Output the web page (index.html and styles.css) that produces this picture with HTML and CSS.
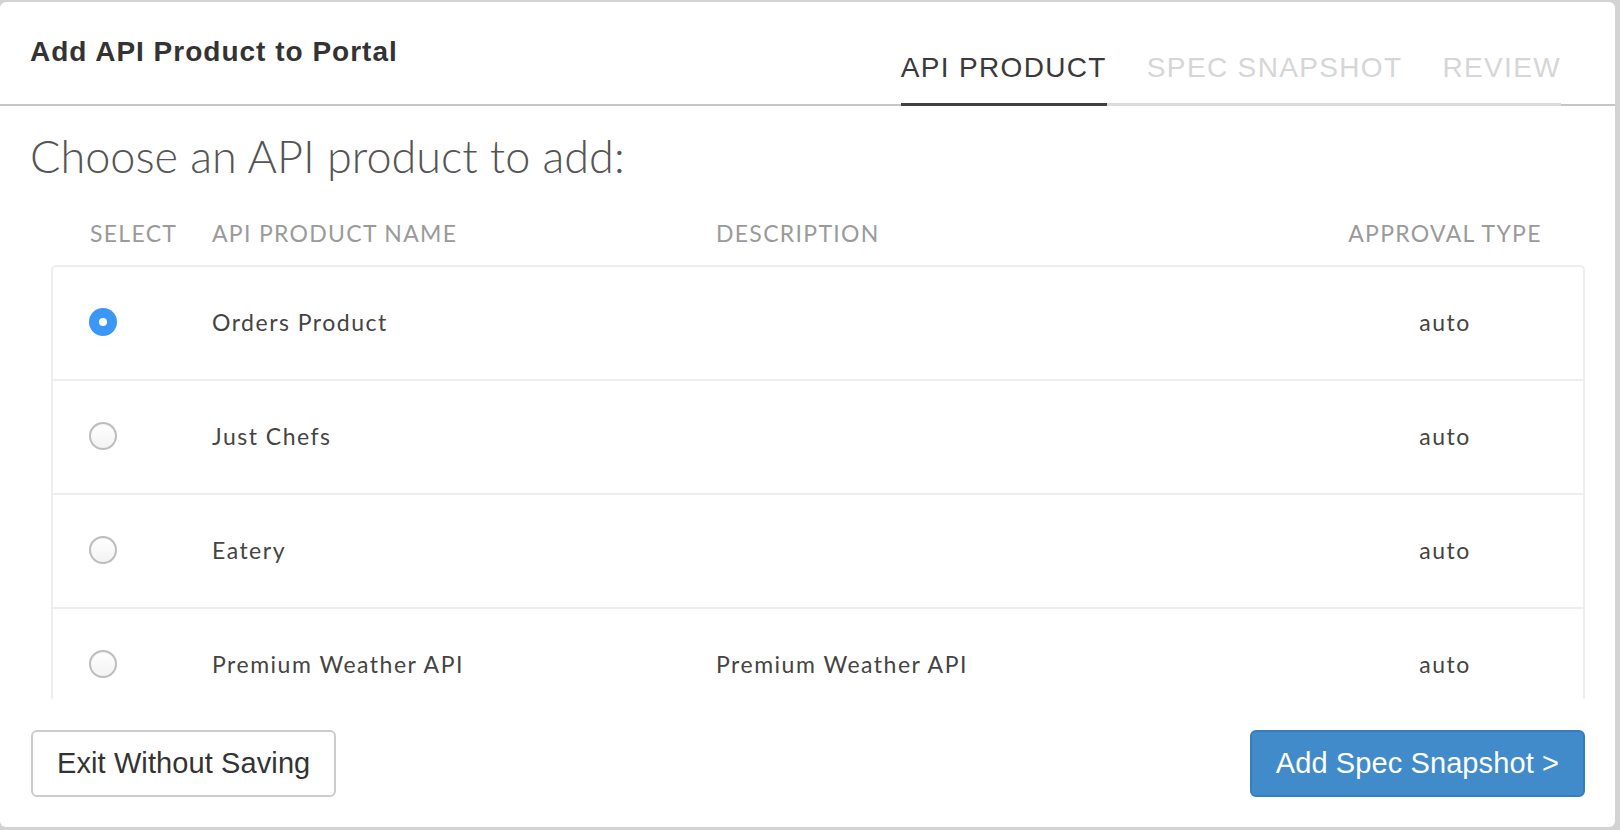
FILE: index.html
```html
<!DOCTYPE html>
<html lang="en">
<head>
<meta charset="utf-8">
<title>Add API Product to Portal</title>
<link rel="stylesheet" href="styles.css">
</head>
<body>
<div class="panel">
  <header class="hdr">
    <h1 class="title">Add API Product to Portal</h1>
    <nav class="tabs">
      <span class="tab active">API PRODUCT</span>
      <span class="tab">SPEC SNAPSHOT</span>
      <span class="tab">REVIEW</span>
    </nav>
  </header>
  <main class="content">
    <h2 class="heading">Choose an API product to add:</h2>
    <div class="cols">
      <span class="c-sel">SELECT</span>
      <span>API PRODUCT NAME</span>
      <span>DESCRIPTION</span>
      <span class="c-app">APPROVAL TYPE</span>
    </div>
    <div class="table">
      <div class="row">
        <span class="c-sel"><span class="radio checked"></span></span>
        <span>Orders Product</span>
        <span></span>
        <span class="c-app">auto</span>
      </div>
      <div class="row">
        <span class="c-sel"><span class="radio"></span></span>
        <span>Just Chefs</span>
        <span></span>
        <span class="c-app">auto</span>
      </div>
      <div class="row">
        <span class="c-sel"><span class="radio"></span></span>
        <span>Eatery</span>
        <span></span>
        <span class="c-app">auto</span>
      </div>
      <div class="row">
        <span class="c-sel"><span class="radio"></span></span>
        <span>Premium Weather API</span>
        <span>Premium Weather API</span>
        <span class="c-app">auto</span>
      </div>
    </div>
  </main>
  <footer class="foot">
    <button class="btn">Exit Without Saving</button>
    <button class="btn primary">Add Spec Snapshot &gt;</button>
  </footer>
</div>
</body>
</html>
```
FILE: styles.css
```css
html, body {
  margin: 0;
  padding: 0;
}
body {
  background: #d3d3d3;
  font-family: "Liberation Sans", Arial, Helvetica, sans-serif;
  overflow: hidden;
}
.panel {
  margin-top: 2px;
  width: 1615px;
  height: 825px;
  background: #fff;
  border-radius: 6px;
  display: flex;
  flex-direction: column;
  overflow: hidden;
}
.hdr {
  height: 102px;
  border-bottom: 2px solid #c6c6c6;
  display: flex;
  justify-content: space-between;
  align-items: flex-start;
  padding: 0 54px 0 30px;
  flex: none;
}
.title {
  margin: 34px 0 0;
  font-size: 28px;
  line-height: 32px;
  font-weight: bold;
  letter-spacing: 1px;
  color: #333;
}
.tabs {
  align-self: flex-end;
  margin-bottom: -2px;
  display: flex;
  gap: 40px;
  border-bottom: 3px solid #dcdcdc;
}
.tab {
  font-size: 28px;
  line-height: 32px;
  letter-spacing: 1.35px;
  color: #d6d6d6;
  padding-bottom: 19px;
}
.tab.active {
  color: #3a3a3a;
  border-bottom: 3px solid #3f3f3f;
  margin-bottom: -3px;
}
.content {
  flex: none;
}
.heading {
  margin: 23px 0 0 30px;
  font-family: Lato, "Open Sans", sans-serif;
  font-weight: 300;
  font-size: 45px;
  line-height: 54px;
  color: #555;
}
.cols, .row {
  display: grid;
  grid-template-columns: 159px 504px 614px 230px;
  padding-right: 23px;
  align-items: center;
  font-family: Lato, "Open Sans", sans-serif;
}
.cols {
  margin: 38px 0 0 53px;
  width: 1530px;
  box-sizing: border-box;
  font-size: 23px;
  line-height: 24px;
  letter-spacing: 1.3px;
  color: #9a9a9a;
  white-space: nowrap;
}
.cols .c-sel {
  padding-left: 37px;
}
.c-app {
  text-align: center;
}
.table {
  margin: 20px 0 0 51px;
  width: 1534px;
  height: 434px;
  box-sizing: border-box;
  border: 2px solid #eeeeee;
  border-bottom: none;
  border-radius: 5px 5px 0 0;
  overflow: hidden;
}
.row {
  height: 112px;
  border-bottom: 2px solid #eeeeee;
  font-size: 23px;
  line-height: 28px;
  letter-spacing: 1.5px;
  color: #444;
}
.row > span {
  margin-top: -2px;
}
.row .c-sel {
  padding-left: 36px;
  display: flex;
}
.radio {
  width: 28px;
  height: 28px;
  box-sizing: border-box;
  border-radius: 50%;
  border: 2px solid #bdbdbd;
  background: linear-gradient(#ffffff, #f3f3f3);
  box-shadow: inset 0 1px 1px rgba(0,0,0,0.05);
  display: flex;
  align-items: center;
  justify-content: center;
}
.radio.checked {
  border: none;
  background: #3b97f6;
  box-shadow: none;
}
.radio.checked::after {
  content: "";
  width: 8px;
  height: 8px;
  border-radius: 50%;
  background: #fff;
}
.foot {
  flex: none;
  display: flex;
  justify-content: space-between;
  padding: 31px 30px 0 31px;
}
.btn {
  height: 67px;
  padding: 0 24px;
  font-family: "Liberation Sans", Arial, Helvetica, sans-serif;
  font-size: 29px;
  letter-spacing: 0.1px;
  color: #333;
  background: #fff;
  border: 2px solid #cccccc;
  border-radius: 6px;
}
.btn.primary {
  color: #fff;
  background: #428bca;
  border-color: #357ebd;
}
```
